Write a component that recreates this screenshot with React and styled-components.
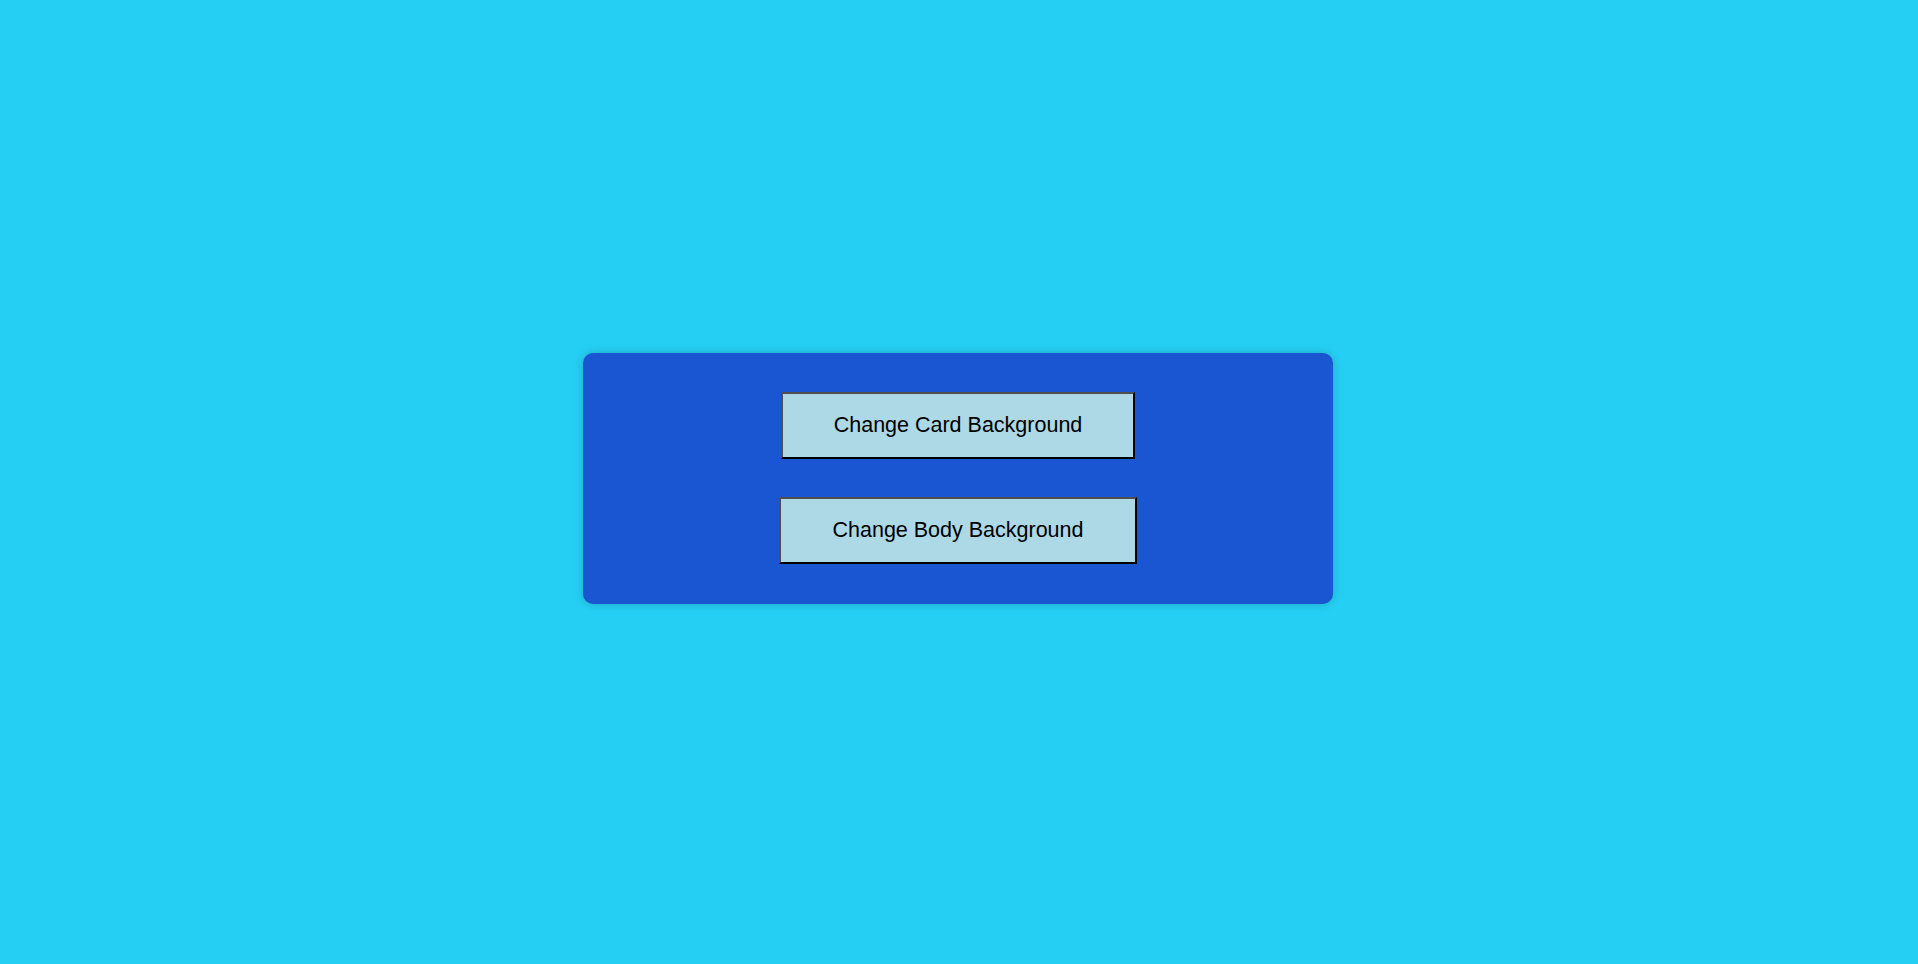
import React, { useState } from "react";
import styled, { createGlobalStyle } from "styled-components";

const GlobalStyle = createGlobalStyle`
  html, body {
    margin: 0;
    padding: 0;
  }
  body {
    background-color: ${(props) => props.bodyColor};
    font-family: "Liberation Sans", Arial, sans-serif;
  }
`;

function App() {
  const [cardColor, setCardColor] = useState("#1a55d2");
  const [bodyColor, setBodyColor] = useState("#25cff3");

  const randomColor = () =>
    "#" +
    Math.floor(Math.random() * 0xffffff)
      .toString(16)
      .padStart(6, "0");

  return (
    <>
      <GlobalStyle bodyColor={bodyColor} />
      <Page>
        <Card $bg={cardColor}>
          <ColorButton onClick={() => setCardColor(randomColor())}>
            Change Card Background
          </ColorButton>
          <ColorButton onClick={() => setBodyColor(randomColor())}>
            Change Body Background
          </ColorButton>
        </Card>
      </Page>
    </>
  );
}

const Page = styled.div`
  min-height: 100vh;
  box-sizing: border-box;
  padding-bottom: 8px;
  padding-right: 2px;
  display: flex;
  align-items: center;
  justify-content: center;
`;

const Card = styled.div`
  width: 750px;
  box-sizing: border-box;
  padding: 39px 0 40px;
  background-color: ${(props) => props.$bg};
  border-radius: 10px;
  box-shadow: 0 0 10px rgba(0, 0, 0, 0.18);
  display: flex;
  flex-direction: column;
  align-items: center;
  gap: 38px;
`;

const ColorButton = styled.button`
  background-color: #add8e6;
  color: #000;
  font-family: "Liberation Sans", Arial, sans-serif;
  font-size: 21.5px;
  line-height: 24px;
  padding: 19px 51px 20px;
  border-width: 2px;
  border-style: solid;
  border-color: #4f4f4f #000 #000 #4f4f4f;
  cursor: pointer;
`;

export default App;
